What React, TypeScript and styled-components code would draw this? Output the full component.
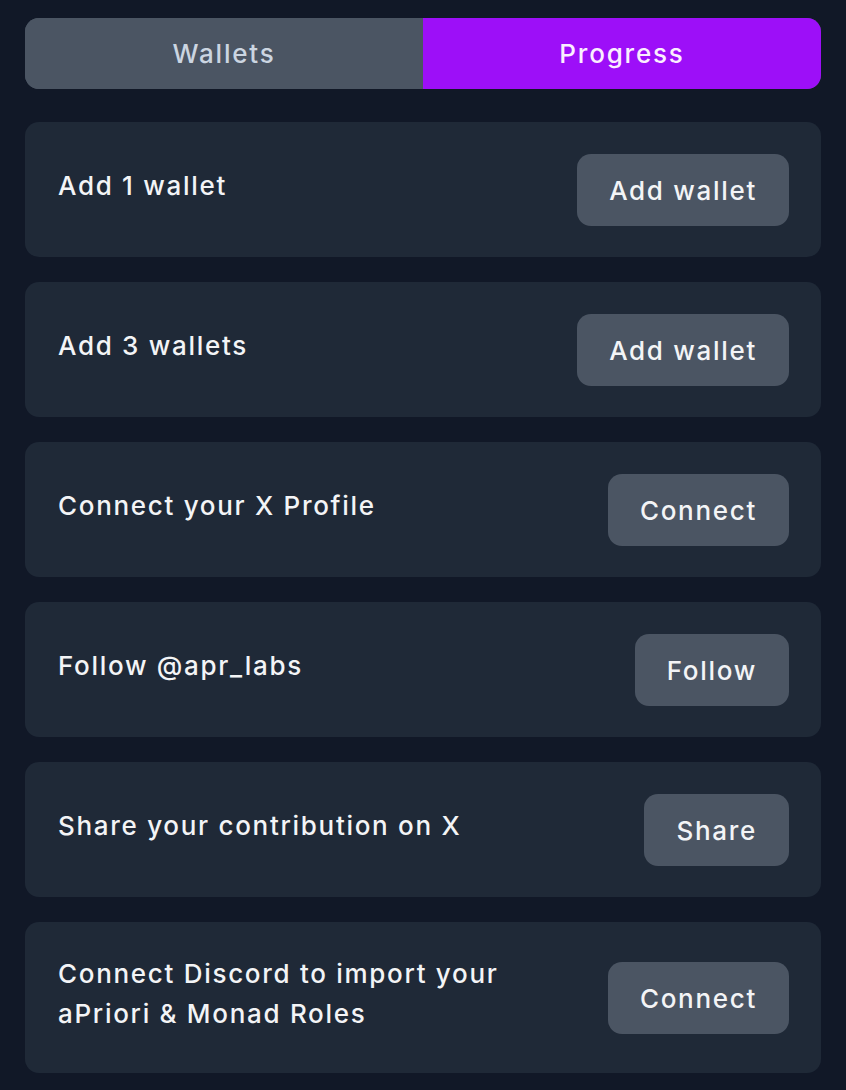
import * as React from "react"
import styled, {createGlobalStyle} from "styled-components";

const GlobalStyle = createGlobalStyle`
  html, body {
    margin: 0;
    padding: 0;
    background: #111827;
  }
  body {
    font-family: Inter, "Noto Sans", "Liberation Sans", sans-serif;
  }
`

type Task = {
  title: string
  action: string
}

const tasks: Task[] = [
  {title: 'Add 1 wallet', action: 'Add wallet'},
  {title: 'Add 3 wallets', action: 'Add wallet'},
  {title: 'Connect your X Profile', action: 'Connect'},
  {title: 'Follow @apr_labs', action: 'Follow'},
  {title: 'Share your contribution on X', action: 'Share'},
  {title: 'Connect Discord to import your aPriori & Monad Roles', action: 'Connect'},
]

const App = () => {
  const [tab, setTab] = React.useState<'wallets' | 'progress'>('progress')

  return (
    <Page>
      <GlobalStyle/>
      <Tabs>
        <Tab active={tab === 'wallets'} onClick={() => setTab('wallets')}>Wallets</Tab>
        <Tab active={tab === 'progress'} onClick={() => setTab('progress')}>Progress</Tab>
      </Tabs>

      <TaskList>
        {tasks.map((t, i) => (
          <TaskCard key={i}>
            <TaskTitle>{t.title}</TaskTitle>
            <ActionButton>{t.action}</ActionButton>
          </TaskCard>
        ))}
      </TaskList>
    </Page>
  );
};

const Page = styled.div`
  background: #111827;
  min-height: 100vh;
  padding: 18px 25px 20px;
  box-sizing: border-box;
`

const Tabs = styled.div`
  display: grid;
  grid-template-columns: 1fr 1fr;
  height: 71px;
  border-radius: 14px;
  overflow: hidden;
  background: #4b5563;
`

const Tab = styled.div<{active?: boolean}>`
  display: flex;
  align-items: center;
  justify-content: center;
  font-size: 26px;
  font-weight: 500;
  letter-spacing: 1.8px;
  cursor: pointer;
  background: ${p => p.active ? '#9d0ff8' : '#4b5563'};
  color: ${p => p.active ? '#fbeeff' : '#cbd5e1'};
`

const TaskList = styled.div`
  display: flex;
  flex-direction: column;
  gap: 25px;
  margin-top: 33px;
`

const TaskCard = styled.div`
  display: flex;
  align-items: center;
  justify-content: space-between;
  gap: 40px;
  background: #1f2937;
  border-radius: 14px;
  padding: 32px 32px 31px 33px;
`

const TaskTitle = styled.div`
  color: #f3f4f6;
  font-size: 26px;
  font-weight: 500;
  line-height: 40px;
  letter-spacing: 1.7px;
  margin-bottom: 8px;
  max-width: 480px;
`

const ActionButton = styled.button`
  flex-shrink: 0;
  height: 72px;
  padding: 0 32px;
  border: none;
  border-radius: 14px;
  background: #4b5563;
  color: #f3f4f6;
  font-family: inherit;
  font-size: 26px;
  font-weight: 500;
  letter-spacing: 1.7px;
  cursor: pointer;
  
  &:hover {
    background: #566172;
  }
`

export default App;
